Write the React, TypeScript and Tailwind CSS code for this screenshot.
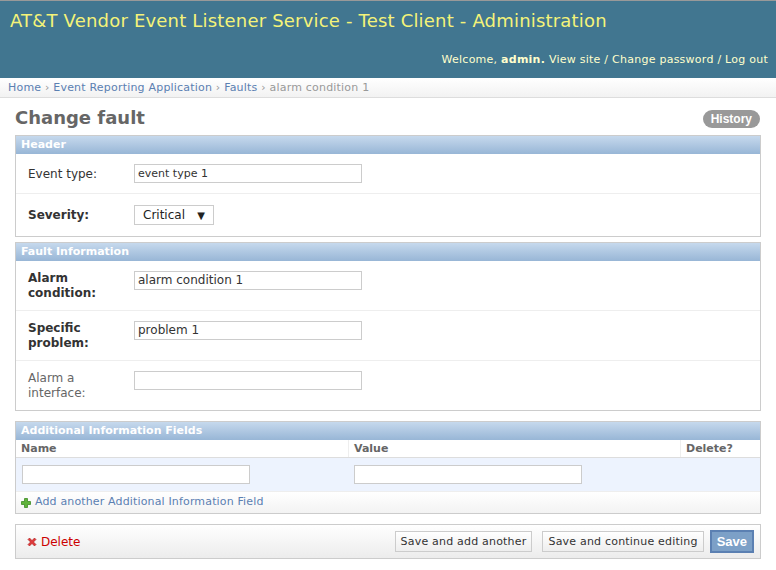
export default function App() {
  const font = { fontFamily: '"DejaVu Sans", Verdana, Arial, sans-serif' };
  const input = "h-[19px] border border-[#ccc] bg-white px-[3px] text-[11px] text-[#333] leading-[17px]";
  const caption =
    "h-[18px] bg-gradient-to-b from-[#c6d9ed] to-[#98b6d6] px-[5px] text-[11px] font-bold leading-[18px] text-white";
  const button =
    "h-[21px] border border-[#ccc] bg-gradient-to-b from-white to-[#eee] px-[5px] text-[11px] leading-[19px] text-[#333] tracking-[0.2px]";

  return (
    <div style={font} className="w-[776px] h-[570px] overflow-hidden bg-white text-[#333]">
      <div className="h-[78px] border-t border-[#999] bg-[#417690] px-[10px] flex flex-col">
        <div className="pt-[9px] text-[18px] leading-[22px] tracking-[0.19px] text-[#f4f379]">
          AT&amp;T Vendor Event Listener Service - Test Client - Administration
        </div>
        <div className="mt-[21px] mr-[-2px] text-right text-[11px] leading-[14px] tracking-[0.25px] text-[#ffc]">
          Welcome, <b>admin.</b> View site / Change password / Log out
        </div>
      </div>

      <div className="h-[20px] border-b border-[#ddd] bg-gradient-to-b from-white to-[#f2f2f2] px-[8px] text-[11px] leading-[20px] tracking-[0.2px] text-[#5b80b2]">
        Home <span className="text-[#999]">›</span> Event Reporting Application{" "}
        <span className="text-[#999]">›</span> Faults <span className="text-[#999]">›</span>{" "}
        <span className="text-[#999]">alarm condition 1</span>
      </div>

      <div className="px-[15px]">
        <div className="flex items-center justify-between h-[37px] pt-[2px]">
          <h1 className="text-[18px] font-bold text-[#666]">Change fault</h1>
          <span
            style={{ fontFamily: '"Liberation Sans", Arial, sans-serif' }}
            className="mr-[1px] mt-[3px] rounded-full bg-[#999] px-[8px] text-[12px] font-bold leading-[18px] text-white"
          >
            History
          </span>
        </div>

        <div className="border border-[#ccc]">
          <div className={caption}>Header</div>
          <div className="flex h-[40px] items-center border-b border-[#eee] px-[12px]">
            <span className="w-[106px] text-[12px]">Event type:</span>
            <div className={`${input} w-[228px]`}>event type 1</div>
          </div>
          <div className="flex h-[42px] items-center px-[12px]">
            <span className="w-[106px] text-[12px] font-bold">Severity:</span>
            <div className="flex h-[20px] w-[80px] items-center justify-between border border-[#ccc] px-[8px] text-[12px] text-[#222]">
              <span>Critical</span>
              <span className="text-[10px]">▼</span>
            </div>
          </div>
        </div>

        <div className="mt-[5px] border border-[#ccc]">
          <div className={caption}>Fault Information</div>
          {[
            ["Alarm condition:", "alarm condition 1", true],
            ["Specific problem:", "problem 1", true],
            ["Alarm a interface:", "", false],
          ].map(([label, value, bold], i) => (
            <div
              key={i}
              className={`flex items-start pt-[10px] px-[12px] ${i < 2 ? "h-[50px] border-b border-[#eee]" : "h-[49px]"}`}
            >
              <span className={`w-[106px] pr-[40px] text-[12px] leading-[15px] ${bold ? "font-bold" : "text-[#666]"}`}>
                {label as string}
              </span>
              <div className={`${input} w-[228px] text-[12px]`}>{value as string}</div>
            </div>
          ))}
        </div>

        <div className="mt-[10px] border border-[#ccc]">
          <div className={caption}>Additional Information Fields</div>
          <div className="flex h-[18px] border-b border-[#ddd] text-[11px] font-bold leading-[17px] text-[#666]">
            <div className="w-[333px] border-r border-[#eee] px-[5px]">Name</div>
            <div className="w-[332px] border-r border-[#eee] px-[5px]">Value</div>
            <div className="flex-1 px-[5px]">Delete?</div>
          </div>
          <div className="flex h-[34px] items-center border-b border-[#eee] bg-[#edf3fe] pl-[6px]">
            <div className={`${input} w-[228px]`}></div>
            <div className={`${input} ml-[104px] w-[228px]`}></div>
          </div>
          <div className="flex h-[21px] items-center bg-gradient-to-b from-white to-[#f3f3f3] px-[5px] text-[11px] tracking-[0.15px] text-[#5b80b2]">
            <svg width="10" height="10" viewBox="0 0 10 10" className="mr-[4px]">
              <path d="M3.5 0.5h3v3h3v3h-3v3h-3v-3h-3v-3h3z" fill="#5fb33a" stroke="#3d8a24" strokeWidth="0.8" />
            </svg>
            Add another Additional Information Field
          </div>
        </div>

        <div className="mt-[10px] flex h-[35px] items-center border border-[#ccc] bg-gradient-to-b from-white to-[#ececec] pl-[11px] pr-[6px]">
          <svg width="10" height="10" viewBox="0 0 10 10" className="mr-[4px]">
            <path
              d="M1 2.5L2.5 1L5 3.5L7.5 1L9 2.5L6.5 5L9 7.5L7.5 9L5 6.5L2.5 9L1 7.5L3.5 5z"
              fill="#e0393a"
              stroke="#a81c1c"
              strokeWidth="0.6"
            />
          </svg>
          <span className="text-[12px] text-[#c00]">Delete</span>
          <div className="ml-auto flex items-center gap-[10px]">
            <span className={button}>Save and add another</span>
            <span className={button}>Save and continue editing</span>
            <span
              style={{ fontFamily: '"Liberation Sans", Arial, sans-serif' }}
              className="ml-[-4px] h-[23px] border-2 border-[#5b80b2] bg-[#7ca0c7] px-[5px] text-[13px] font-bold leading-[19px] text-white"
            >
              Save
            </span>
          </div>
        </div>
      </div>
    </div>
  );
}
